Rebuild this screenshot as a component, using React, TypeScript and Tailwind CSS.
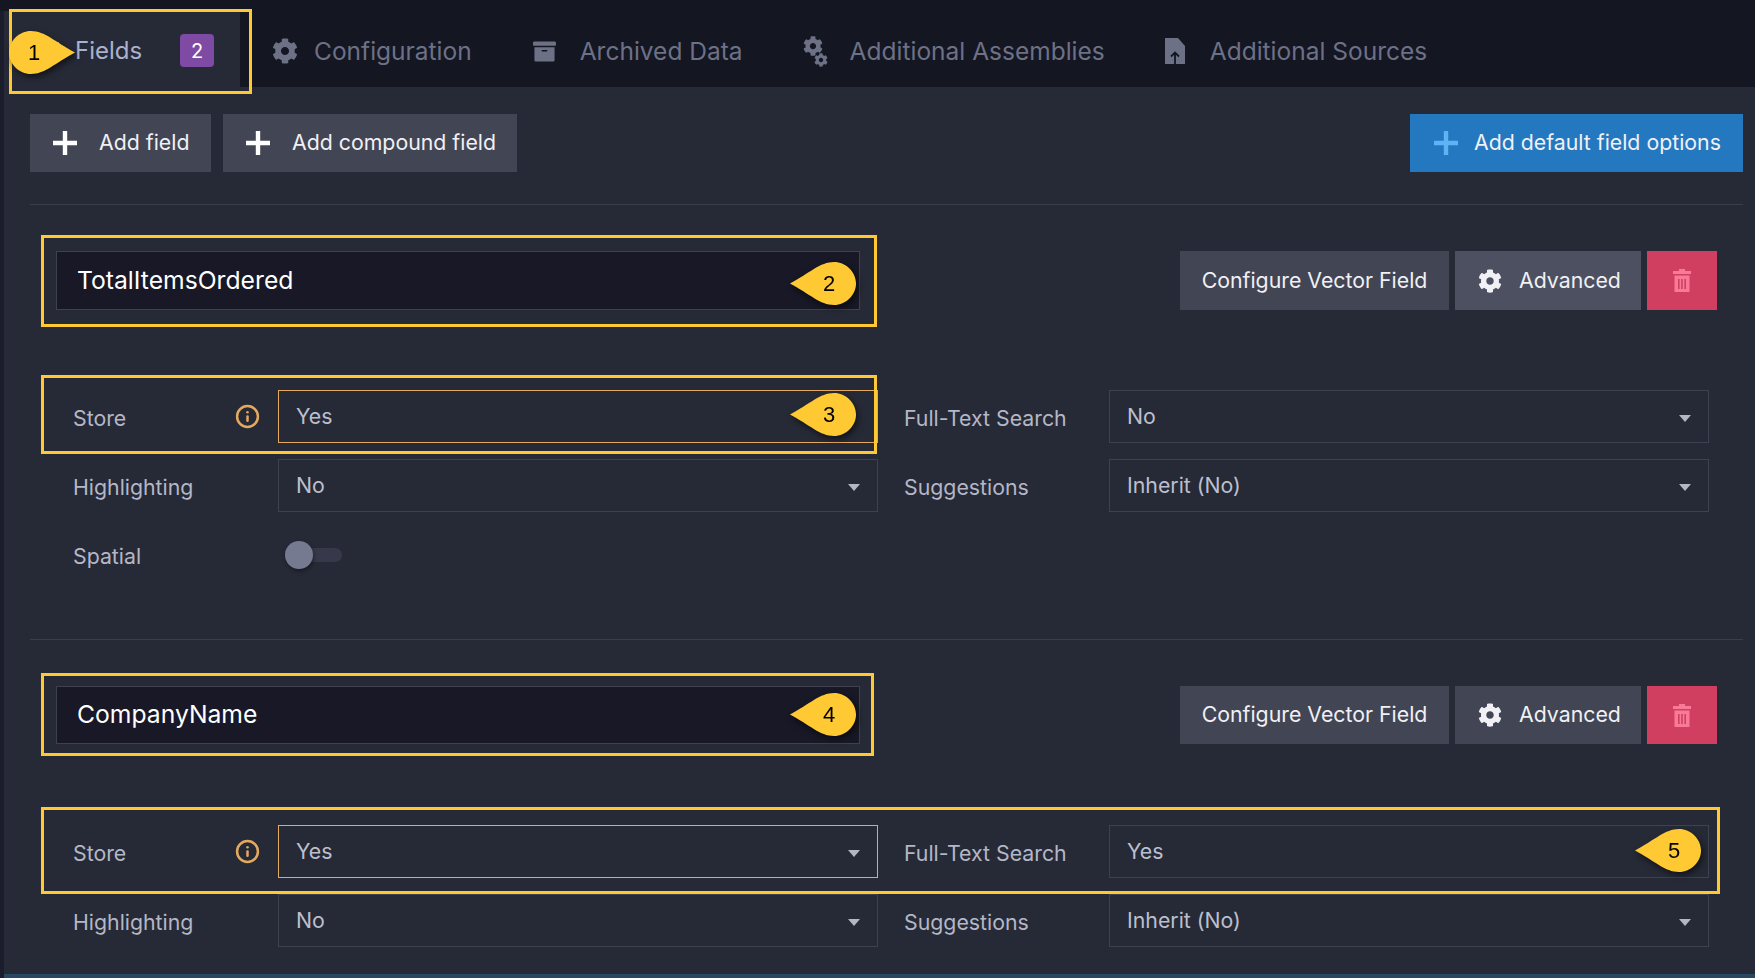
import { FaArchive, FaCog, FaListUl } from "react-icons/fa";
import { Info } from "lucide-react";

function PlusIcon({ className }: { className: string }) {
  return (
    <svg viewBox="0 0 24 24" className={`h-[24px] w-[24px] shrink-0 ${className}`} fill="currentColor">
      <path d="M9.8 0h4.4v9.8H24v4.4h-9.8V24H9.8v-9.8H0V9.8h9.8z" />
    </svg>
  );
}

function FileUpIcon() {
  return (
    <svg viewBox="0 0 20 26" className="h-[26px] w-[20px] shrink-0">
      <path d="M0 0h13l7 8v18H0z" fill="#6d7186" />
      <path d="M10 26V15M6 18.5l4-4 4 4" fill="none" stroke="#141622" strokeWidth="1.8" />
    </svg>
  );
}

function TrashIcon() {
  return (
    <svg viewBox="0 0 18 23" className="h-[23px] w-[18px]" fill="#f97a96">
      <path d="M6 0h6v2h6v3H0V2h6z" />
      <path fillRule="evenodd" d="M1.5 6.5h15V23h-15zM5 10v10h1.6V10zM8.2 10v10h1.6V10zM11.4 10v10H13V10z" />
    </svg>
  );
}

function CogsIcon() {
  return (
    <span className="relative block h-[31px] w-[25px] shrink-0 text-[#6d7186]">
      <FaCog className="absolute left-0 top-0 h-[20px] w-[20px]" />
      <FaCog className="absolute bottom-0 right-0 h-[14px] w-[14px]" />
    </span>
  );
}

function NavTab({ icon, label, className }: { icon: React.ReactNode; label: string; className: string }) {
  return (
    <div className={`flex items-center pt-[15px] whitespace-nowrap text-[#6d7186] ${className}`}>
      {icon}
      <span>{label}</span>
    </div>
  );
}

function Callout({ n, className, flip }: { n: number; className: string; flip?: boolean }) {
  return (
    <div className={`absolute h-[43px] w-[66px] drop-shadow-[2px_3px_3px_rgba(0,0,0,0.55)] ${className}`}>
      <svg viewBox="0 0 66 43" className={`h-full w-full ${flip ? "-scale-x-100" : ""}`} fill="#ffc933">
        <path d="M22 0C36 0 46 11 66 21.5 46 32 36 43 22 43 10 43 0 33 0 21.5 0 10 10 0 22 0z" />
      </svg>
      <span
        className={`absolute top-[2px] text-[22px] leading-[40px] text-black font-['Liberation_Sans',sans-serif] ${
          flip ? "left-[33px]" : "left-[19px]"
        }`}
      >
        {n}
      </span>
    </div>
  );
}

function Select({ value, active, hideCaret }: { value: string; active?: boolean; hideCaret?: boolean }) {
  return (
    <div
      className={`flex h-[53px] items-center justify-between border pl-[17px] pr-[17px] text-[#bcbfce] ${
        active ? "border-[#e3a95f]" : "border-[#3d4150]"
      }`}
    >
      <span className="mt-[1px]">{value}</span>
      {!hideCaret && <span className="mt-[4px] h-0 w-0 border-x-[6px] border-t-[7px] border-x-transparent border-t-[#b4b6c4]" />}
    </div>
  );
}

function Label({ text, info, second }: { text: string; info?: boolean; second?: boolean }) {
  return (
    <div className={`flex items-center justify-between whitespace-nowrap pr-[18px] text-[#b4b7c6] ${second ? "pl-[26px]" : "pl-[17px]"}`}>
      <span className="mt-[5px]">{text}</span>
      {info && <Info className="h-[25px] w-[25px] text-[#e3a95f]" strokeWidth={2.4} />}
    </div>
  );
}

function FieldHead({ name, hovered, tall }: { name: string; hovered?: boolean; tall?: boolean }) {
  return (
    <div className={`flex shrink-0 justify-between pl-[26px] pr-[26px] ${tall ? "h-[59px]" : "h-[58px]"}`}>
      <div className="flex w-[804px] items-center border border-[#3d4150] bg-[#181826] pl-[20px] text-[24.7px] text-white">
        <span>{name}</span>
      </div>
      <div className="flex gap-[6px] text-[#f0f0f5]">
        <div className="flex w-[269px] items-center justify-center bg-[#424553]">Configure Vector Field</div>
        <div className={`flex w-[186px] items-center gap-[17px] pl-[23px] ${hovered ? "bg-[#4d5060]" : "bg-[#424553]"}`}>
          <FaCog className="h-[24px] w-[24px]" />
          <span>Advanced</span>
        </div>
        <div className="flex w-[70px] items-center justify-center bg-[#d13f60]">
          <TrashIcon />
        </div>
      </div>
    </div>
  );
}

function FieldGrid({ spatial, fullText, hideStoreCaret, hideFullCaret, className }: { spatial?: boolean; fullText: string; hideStoreCaret?: boolean; hideFullCaret?: boolean; className: string }) {
  return (
    <div className={`ml-[26px] grid shrink-0 grid-cols-[222px_600px_231px_600px] gap-y-[16px] ${className}`}>
      <Label text="Store" info />
      <Select value="Yes" active hideCaret={hideStoreCaret} />
      <Label text="Full-Text Search" second />
      <Select value={fullText} hideCaret={hideFullCaret} />
      <Label text="Highlighting" />
      <Select value="No" />
      <Label text="Suggestions" second />
      <Select value="Inherit (No)" />
      {spatial && (
        <>
          <Label text="Spatial" />
          <div className="flex h-[53px] items-center pl-[7px]">
            <div className="relative h-[14px] w-[57px] rounded-full bg-[#37394a]">
              <span className="absolute -top-[7px] left-0 h-[28px] w-[28px] rounded-full bg-[#767a90] shadow-[1px_2px_4px_rgba(0,0,0,0.4)]" />
            </div>
          </div>
        </>
      )}
    </div>
  );
}

export default function App() {
  return (
    <div className="relative flex h-[978px] w-full flex-col overflow-hidden bg-[#262a36] text-[21.3px] font-['Inter',sans-serif]">
      {/* tab bar */}
      <div className="flex h-[87px] shrink-0 bg-[#141622] text-[24.5px]">
        <div className="mt-[11px] flex w-[240px] items-center border-l-4 border-[#1c1d2c] bg-[#262a36]">
          <FaListUl className="ml-[31px] mt-[3px] h-[24px] w-[24px] text-[#a9b1cf]" />
          <span className="ml-[16px] mt-[3px] text-[24px] text-[#a9b1cf]">Fields</span>
          <span className="ml-[38px] mt-[3px] flex h-[33px] w-[34px] items-center justify-center rounded-[4px] bg-[#7f4aa3] text-[20px] text-white">2</span>
        </div>
        <NavTab className="ml-[32px] gap-[16px]" icon={<FaCog className="h-[26px] w-[26px]" />} label="Configuration" />
        <NavTab className="ml-[61px] gap-[24px]" icon={<FaArchive className="h-[23px] w-[23px]" />} label="Archived Data" />
        <NavTab className="ml-[60px] gap-[22px]" icon={<CogsIcon />} label="Additional Assemblies" />
        <NavTab className="ml-[60px] gap-[25px]" icon={<FileUpIcon />} label="Additional Sources" />
      </div>

      <div className="flex min-h-0 flex-1 flex-col border-l-4 border-[#1c1d2c] pl-[26px] pr-[12px]">
        {/* toolbar */}
        <div className="mt-[27px] flex h-[58px] shrink-0 text-[#f0f0f5]">
          <div className="flex w-[181px] items-center gap-[22px] bg-[#424553] pl-[23px]">
            <PlusIcon className="text-white" />
            <span className="-mt-[1px]">Add field</span>
          </div>
          <div className="ml-[12px] flex w-[294px] items-center gap-[22px] bg-[#424553] pl-[23px]">
            <PlusIcon className="text-white" />
            <span className="-mt-[1px]">Add compound field</span>
          </div>
          <div className="ml-auto flex w-[333px] items-center gap-[16px] bg-[#2378bf] pl-[24px]">
            <PlusIcon className="text-[#5eb3f5]" />
            <span className="-mt-[1px]">Add default field options</span>
          </div>
        </div>

        <div className="mb-[46px] mt-[32px] h-px shrink-0 bg-[#3a3e4a]" />
        <FieldHead name="TotalItemsOrdered" hovered tall />
        <FieldGrid className="mt-[80px]" spatial fullText="No" hideStoreCaret />

        <div className="mb-[46px] mt-[58px] h-px shrink-0 bg-[#3a3e4a]" />
        <FieldHead name="CompanyName" />
        <FieldGrid className="mt-[81px]" fullText="Yes" hideFullCaret />

        <div className="mt-auto -ml-[26px] -mr-[12px] h-[4px] shrink-0 bg-[#264863]" />
      </div>

      {/* annotation boxes */}
      <div className="pointer-events-none absolute left-[9px] top-[9px] h-[85px] w-[243px] border-[3px] border-[#ffc933]" />
      <div className="pointer-events-none absolute left-[41px] top-[235px] h-[92px] w-[836px] border-[3px] border-[#ffc933]" />
      <div className="pointer-events-none absolute left-[41px] top-[375px] h-[79px] w-[836px] border-[3px] border-[#ffc933]" />
      <div className="pointer-events-none absolute left-[41px] top-[673px] h-[83px] w-[833px] border-[3px] border-[#ffc933]" />
      <div className="pointer-events-none absolute left-[41px] top-[807px] h-[87px] w-[1679px] border-[3px] border-[#ffc933]" />

      <Callout n={1} className="left-[9px] top-[31px]" />
      <Callout n={2} className="left-[790px] top-[262px]" flip />
      <Callout n={3} className="left-[790px] top-[393px]" flip />
      <Callout n={4} className="left-[790px] top-[693px]" flip />
      <Callout n={5} className="left-[1635px] top-[829px]" flip />
    </div>
  );
}
